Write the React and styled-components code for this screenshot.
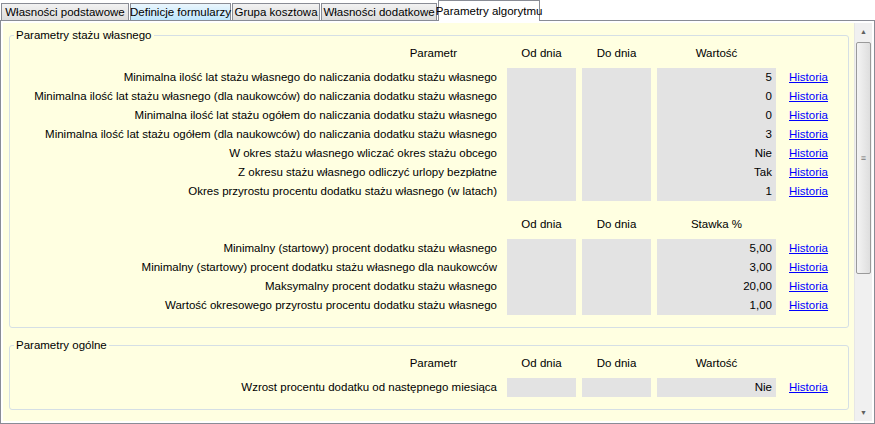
import React from "react";
import styled, { createGlobalStyle } from "styled-components";

const G = createGlobalStyle`
  html,body{margin:0;padding:0;background:#fff;}
  body{font-family:"Liberation Sans",Arial,sans-serif;font-size:11.5px;color:#000;}
`;
const Win = styled.div`width:875px;height:424px;display:flex;flex-direction:column;`;
const Tabs = styled.div`display:flex;height:21px;align-items:flex-end;padding-left:1px;`;
const Tab = styled.div`
  height:${p=>p.$active?21:18}px;width:${p=>p.$w}px;box-sizing:border-box;
  border:1px solid #898c95;border-bottom:${p=>p.$active?"none":"1px solid #898c95"};
  margin-right:${p=>p.$active?0:1}px;
  background:${p=>p.$active?"#fff":p.$hover?"linear-gradient(#eaf6fd,#bee6fd)":"linear-gradient(#f2f2f2,#dcdcdc)"};
  display:flex;align-items:center;justify-content:center;font-size:11.5px;white-space:nowrap;
  position:relative;z-index:1;
`;
const Panel = styled.div`
  flex:1;margin-top:-1px;border:1px solid #898c95;background:#fff;padding:2px;display:flex;
`;
const Body = styled.div`flex:1;background:#ffffe1;padding:6px 5px 0 6px;display:flex;flex-direction:column;gap:11px;overflow:hidden;`;
const Group = styled.fieldset`
  margin:0;border:1px solid #d5dfe5;border-radius:3px;padding:4px 12px 12px 0;min-width:0;
`;
const Legend = styled.legend`padding:0 2px;margin-left:4px;font-size:11.5px;`;
const Grid = styled.div`
  display:grid;grid-template-columns:1fr 69px 69px 119px 54px;column-gap:6px;
  & > .h{text-align:center;height:16px;line-height:16px;margin-bottom:7px;}
`;
const Label = styled.div`text-align:right;height:19px;line-height:19px;padding-right:4px;white-space:nowrap;`;
const Cell = styled.div`background:#e3e3e3;height:19px;line-height:19px;text-align:right;padding-right:4px;`;
const Link = styled.a`color:#0000ff;text-decoration:underline;line-height:19px;padding-left:7px;`;
const Spacer = styled.div`height:${p=>p.$h}px;grid-column:1/-1;`;
const Scroll = styled.div`width:17px;display:flex;flex-direction:column;background:#f0f0f0;border-left:1px solid #e6e6e6;`;
const Arrow = styled.div`height:17px;display:flex;align-items:center;justify-content:center;font-size:7px;color:#606060;`;
const Thumb = styled.div`height:230px;margin:2px 1px;border:1px solid #9a9a9a;border-radius:2px;
  background:linear-gradient(90deg,#f4f4f4,#dedede);display:flex;align-items:center;justify-content:center;color:#777;font-size:9px;`;

const rows1=[["Minimalna ilość lat stażu własnego do naliczania dodatku stażu własnego","5"],
["Minimalna ilość lat stażu własnego (dla naukowców) do naliczania dodatku stażu własnego","0"],
["Minimalna ilość lat stażu ogółem do naliczania dodatku stażu własnego","0"],
["Minimalna ilość lat stażu ogółem (dla naukowców) do naliczania dodatku stażu własnego","3"],
["W okres stażu własnego wliczać okres stażu obcego","Nie"],
["Z okresu stażu własnego odliczyć urlopy bezpłatne","Tak"],
["Okres przyrostu procentu dodatku stażu własnego (w latach)","1"]];
const rows2=[["Minimalny (startowy) procent dodatku stażu własnego","5,00"],
["Minimalny (startowy) procent dodatku stażu własnego dla naukowców","3,00"],
["Maksymalny procent dodatku stażu własnego","20,00"],
["Wartość okresowego przyrostu procentu dodatku stażu własnego","1,00"]];

const Header=({p,v})=>(<><div className="h" style={{textAlign:"right",paddingRight:44}}>{p}</div><div className="h">Od dnia</div><div className="h">Do dnia</div><div className="h">{v}</div><div/></>);
const Rows=({rows})=>rows.map(([l,v])=>(<React.Fragment key={l}><Label>{l}</Label><Cell/><Cell/><Cell>{v}</Cell><Link>Historia</Link></React.Fragment>));

export default function App(){
  return <Win><G/>
    <Tabs>
      <Tab $w={128}>Własności podstawowe</Tab>
      <Tab $w={101} $hover>Definicje formularzy</Tab>
      <Tab $w={88}>Grupa kosztowa</Tab>
      <Tab $w={116}>Własności dodatkowe</Tab>
      <Tab $w={102} $active>Parametry algorytmu</Tab>
    </Tabs>
    <Panel>
      <Body>
        <Group><Legend>Parametry stażu własnego</Legend>
          <Grid><Header p="Parametr" v="Wartość"/><Rows rows={rows1}/><Spacer $h={15}/><Header p="" v="Stawka %"/><Rows rows={rows2}/></Grid>
        </Group>
        <Group><Legend>Parametry ogólne</Legend>
          <Grid><Header p="Parametr" v="Wartość"/><Rows rows={[["Wzrost procentu dodatku od następnego miesiąca","Nie"]]}/></Grid>
        </Group>
      </Body>
      <Scroll><Arrow>▲</Arrow><Thumb>≡</Thumb><div style={{flex:1}}/><Arrow>▼</Arrow></Scroll>
    </Panel>
  </Win>;
}
